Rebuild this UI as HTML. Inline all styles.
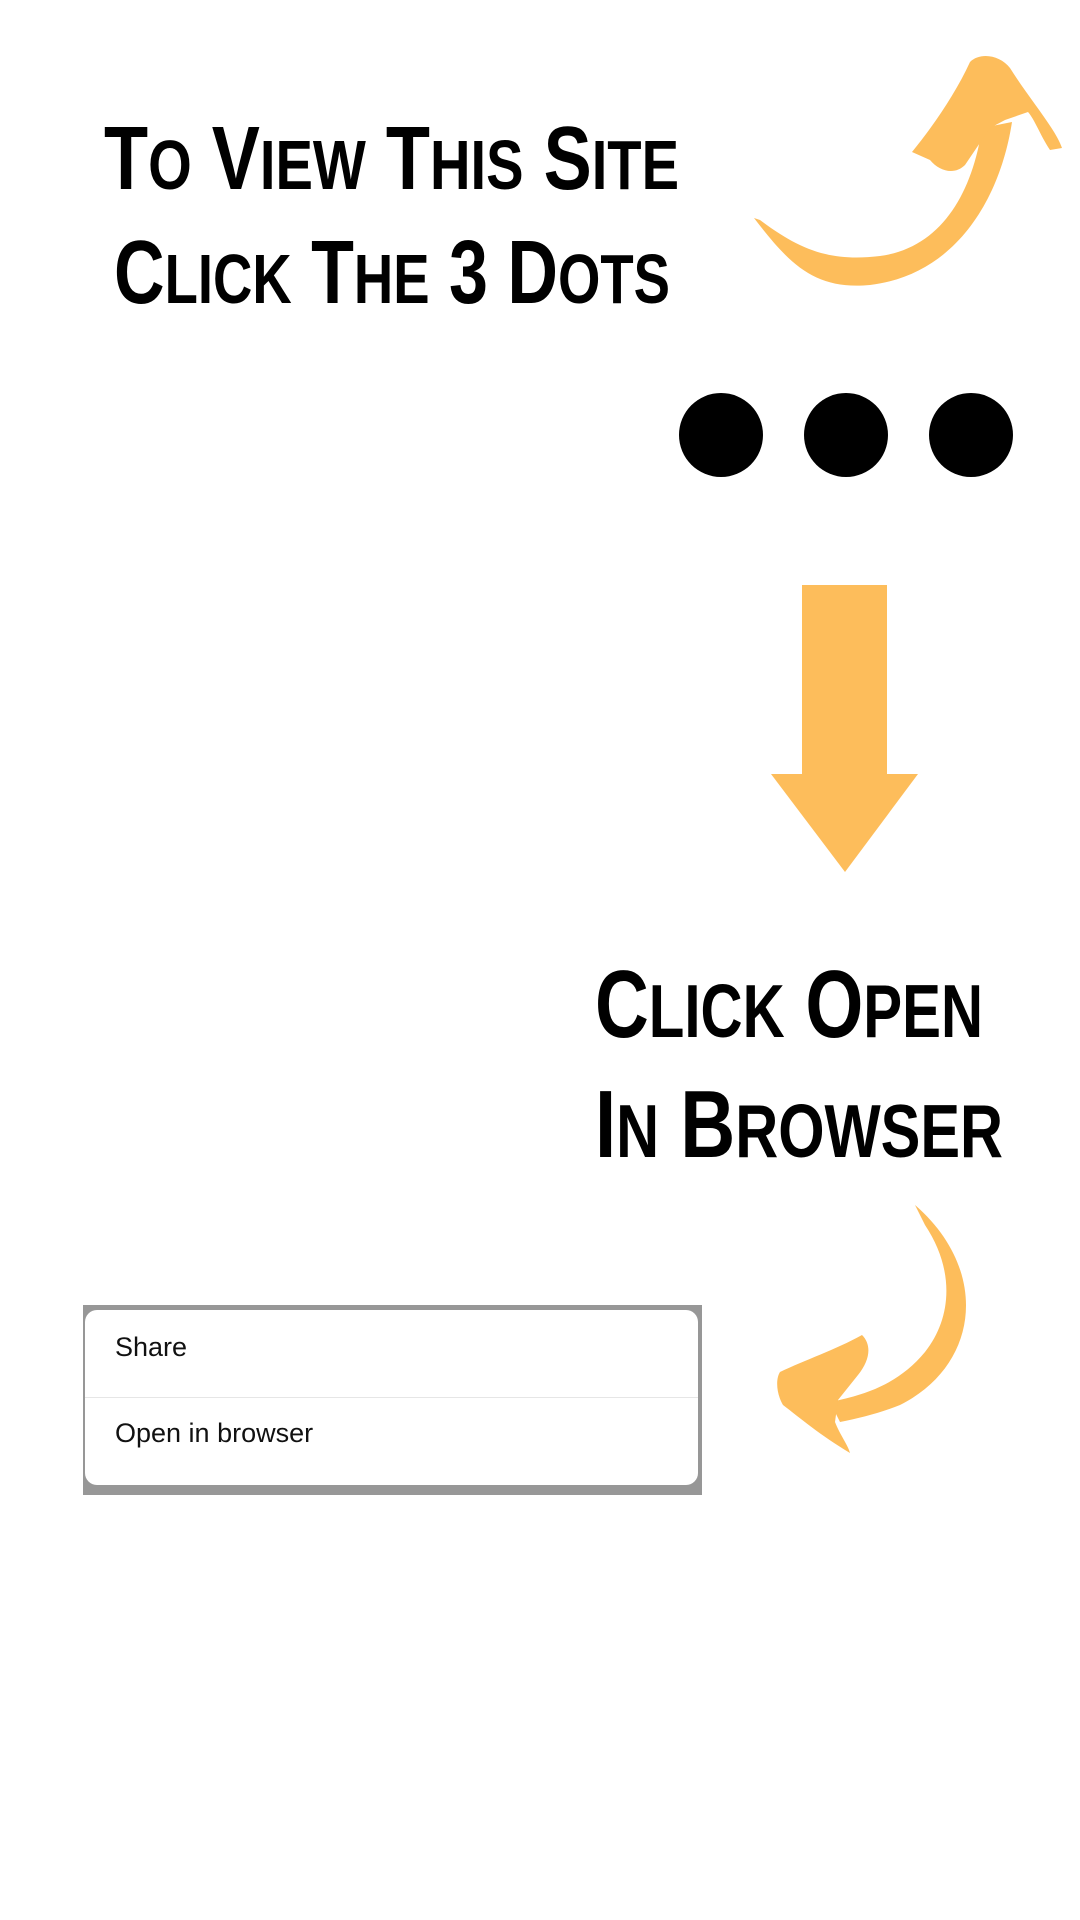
<!DOCTYPE html>
<html><head><meta charset="utf-8"><style>
html,body{margin:0;padding:0;background:#fff;}
body{width:1080px;height:1920px;position:relative;overflow:hidden;font-family:"Liberation Sans",sans-serif;}
svg{position:absolute;left:0;top:0;}
.menu{position:absolute;left:83px;top:1305px;width:619px;height:190px;background:#979797;}
.card{position:absolute;left:2px;top:5px;width:613px;height:175px;background:#fff;border-radius:12px;}
.row{position:absolute;left:30px;font-size:27px;color:#111;}
.div{position:absolute;left:0;right:0;top:87px;height:1px;background:#e6e6e6;}
</style></head><body>
<svg width="1080" height="1920" viewBox="0 0 1080 1920">
<g font-family="Liberation Sans, sans-serif" font-weight="bold" fill="#000">
<text x="104" y="189" textLength="575" lengthAdjust="spacingAndGlyphs" font-size="90">T<tspan font-size="70">O</tspan> V<tspan font-size="70">IEW</tspan> T<tspan font-size="70">HIS</tspan> S<tspan font-size="70">ITE</tspan></text>
<text x="114" y="303" textLength="556" lengthAdjust="spacingAndGlyphs" font-size="90">C<tspan font-size="70">LICK</tspan> T<tspan font-size="70">HE</tspan> 3 D<tspan font-size="70">OTS</tspan></text>
<text x="595" y="1037" textLength="388" lengthAdjust="spacingAndGlyphs" font-size="96">C<tspan font-size="75">LICK</tspan> O<tspan font-size="75">PEN</tspan></text>
<text x="595" y="1157" textLength="408" lengthAdjust="spacingAndGlyphs" font-size="96">I<tspan font-size="75">N</tspan> B<tspan font-size="75">ROWSER</tspan></text>
</g>
<circle cx="721" cy="435" r="42" fill="#000"/>
<circle cx="846" cy="435" r="42" fill="#000"/>
<circle cx="971" cy="435" r="42" fill="#000"/>
<g fill="#fdbd5b">
<rect x="802" y="585" width="85" height="190"/>
<polygon points="771,774 918,774 845,872"/>
<path d="M754,218 C790,265 815,290 870,285 C955,275 1000,200 1012,122 L982,128 C972,195 940,248 880,256 C830,262 800,250 760,220 Z"/>
<path d="M912,152 C930,130 955,95 970,62 C980,52 1000,55 1010,68 C1030,100 1055,128 1062,148 L1050,150 C1040,135 1035,120 1028,112 L1005,120 L990,128 L965,165 C955,175 940,172 930,160 Z"/>
<path d="M915,1205 C990,1270 980,1365 900,1405 C880,1413 860,1418 840,1422 L830,1402 C870,1394 900,1382 925,1352 C952,1318 955,1270 925,1225 Z"/>
<path d="M862,1335 C872,1345 870,1360 858,1375 L838,1400 L835,1422 C840,1435 848,1445 850,1453 C820,1435 800,1418 783,1405 C777,1395 775,1380 780,1372 C805,1360 835,1350 862,1335 Z"/>
</g>
</svg>
<div class="menu"><div class="card">
<div class="row" style="top:22px">Share</div>
<div class="div"></div>
<div class="row" style="top:108px">Open in browser</div>
</div></div>
</body></html>
